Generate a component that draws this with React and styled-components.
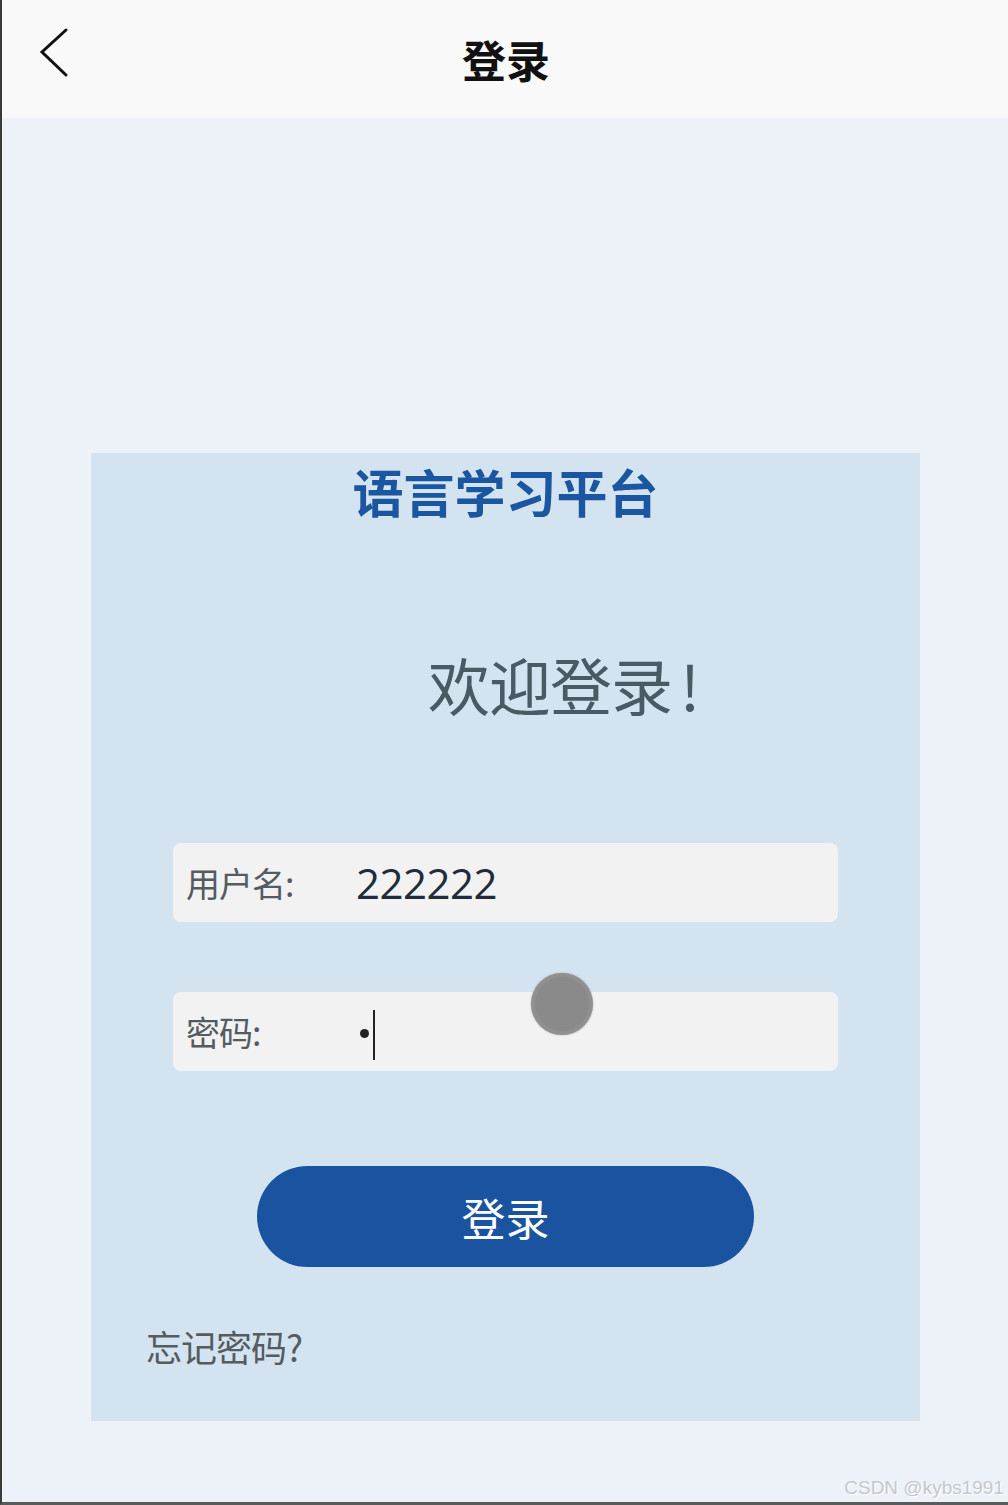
import React from "react";
import styled, { createGlobalStyle } from "styled-components";

const GlobalStyle = createGlobalStyle`
	html, body {
		margin: 0;
		padding: 0;
		background: #edf1f8;
	}
	body {
		font-family: "Noto Sans CJK SC", "Noto Sans", sans-serif;
	}
`;

const Frame = styled.div`
	position: relative;
	width: 1008px;
	height: 1505px;
	box-sizing: border-box;
	border-left: 2px solid #3a3a3a;
	border-bottom: 3px solid #5a5a5a;
	background: #edf1f8;
	display: flex;
	flex-direction: column;
	overflow: hidden;
`;

const Header = styled.header`
	position: relative;
	height: 118px;
	background: #f9f9f9;
	display: flex;
	align-items: center;
	justify-content: center;
	flex-shrink: 0;
`;

const BackButton = styled.button`
	position: absolute;
	left: 30px;
	top: 24px;
	width: 44px;
	height: 58px;
	padding: 0;
	border: none;
	background: none;
	cursor: pointer;
`;

const HeaderTitle = styled.h1`
	margin: 0 0 0 2px;
	font-size: 44px;
	font-weight: 700;
	color: #111;
	line-height: 1;
`;

const Main = styled.main`
	flex: 1;
	padding: 335px 0 0 89px;
`;

const Card = styled.section`
	width: 829px;
	height: 968px;
	box-sizing: border-box;
	background: #d4e3f0;
	padding-top: 8px;
	display: flex;
	flex-direction: column;
`;

const Brand = styled.h2`
	margin: 0;
	text-align: center;
	font-size: 51px;
	line-height: 60px;
	font-weight: 700;
	color: #1b56a0;
`;

const Welcome = styled.div`
	margin: 127px 0 0 337px;
	font-size: 62px;
	line-height: 72px;
	font-weight: 400;
	color: #4a5a62;
	letter-spacing: -1px;

	span {
		margin-left: 8px;
	}
`;

const Field = styled.label`
	position: relative;
	display: flex;
	align-items: center;
	width: 665px;
	height: 79px;
	margin: ${(p) => p.$top}px 0 0 82px;
	box-sizing: border-box;
	padding-left: 13px;
	background: #f2f2f2;
	border-radius: 8px;
`;

const FieldLabel = styled.span`
	width: 170px;
	font-size: 34px;
	color: #545c62;
	letter-spacing: -1px;
`;

const FieldValue = styled.span`
	font-family: "Open Sans", "Noto Sans", sans-serif;
	font-size: 42px;
	color: #222c38;
	letter-spacing: -0.5px;
	display: flex;
	align-items: center;
`;

const Dot = styled.span`
	display: inline-block;
	width: 9px;
	height: 9px;
	border-radius: 50%;
	background: #222;
	margin-left: 4px;
	margin-top: 4px;
`;

const Caret = styled.span`
	display: inline-block;
	width: 2px;
	height: 50px;
	background: #222;
	margin-left: 4px;
	margin-top: 6px;
`;

const Touch = styled.span`
	position: absolute;
	left: 358px;
	top: -19px;
	width: 62px;
	height: 62px;
	box-sizing: border-box;
	border-radius: 50%;
	background: #8a8a8a;
	border: 4px solid rgba(150, 150, 150, 0.55);
	box-shadow: 0 0 2px rgba(120, 120, 120, 0.6);
`;

const LoginButton = styled.button`
	width: 497px;
	height: 101px;
	margin: 95px 0 0 166px;
	border: none;
	border-radius: 51px;
	background: #1a54a0;
	color: #fff;
	font-family: "Noto Sans CJK SC", sans-serif;
	font-size: 44px;
	cursor: pointer;
`;

const Forgot = styled.a`
	margin: 57px 0 0 55px;
	font-size: 36px;
	line-height: 44px;
	color: #545c62;
	letter-spacing: -1px;
	cursor: pointer;
`;

const Watermark = styled.div`
	position: absolute;
	right: 4px;
	bottom: 3px;
	font-family: "Liberation Sans", Arial, sans-serif;
	font-size: 19px;
	color: #c4c8cc;
	text-shadow: 1px 1px 0 #fff;
`;

export default function App() {
	return (
		<Frame>
			<GlobalStyle />
			<Header>
				<BackButton aria-label="back">
					<svg width="44" height="58" viewBox="0 0 44 58">
						<polyline
							points="34,6 10,28 34,51"
							fill="none"
							stroke="#111"
							strokeWidth="3"
							strokeLinecap="round"
							strokeLinejoin="miter"
						/>
					</svg>
				</BackButton>
				<HeaderTitle>登录</HeaderTitle>
			</Header>
			<Main>
				<Card>
					<Brand>语言学习平台</Brand>
					<Welcome>
						欢迎登录<span>!</span>
					</Welcome>
					<Field $top={123}>
						<FieldLabel>用户名:</FieldLabel>
						<FieldValue>222222</FieldValue>
					</Field>
					<Field $top={70}>
						<FieldLabel>密码:</FieldLabel>
						<FieldValue>
							<Dot />
							<Caret />
						</FieldValue>
						<Touch />
					</Field>
					<LoginButton>登录</LoginButton>
					<Forgot>忘记密码?</Forgot>
				</Card>
			</Main>
			<Watermark>CSDN @kybs1991</Watermark>
		</Frame>
	);
}
